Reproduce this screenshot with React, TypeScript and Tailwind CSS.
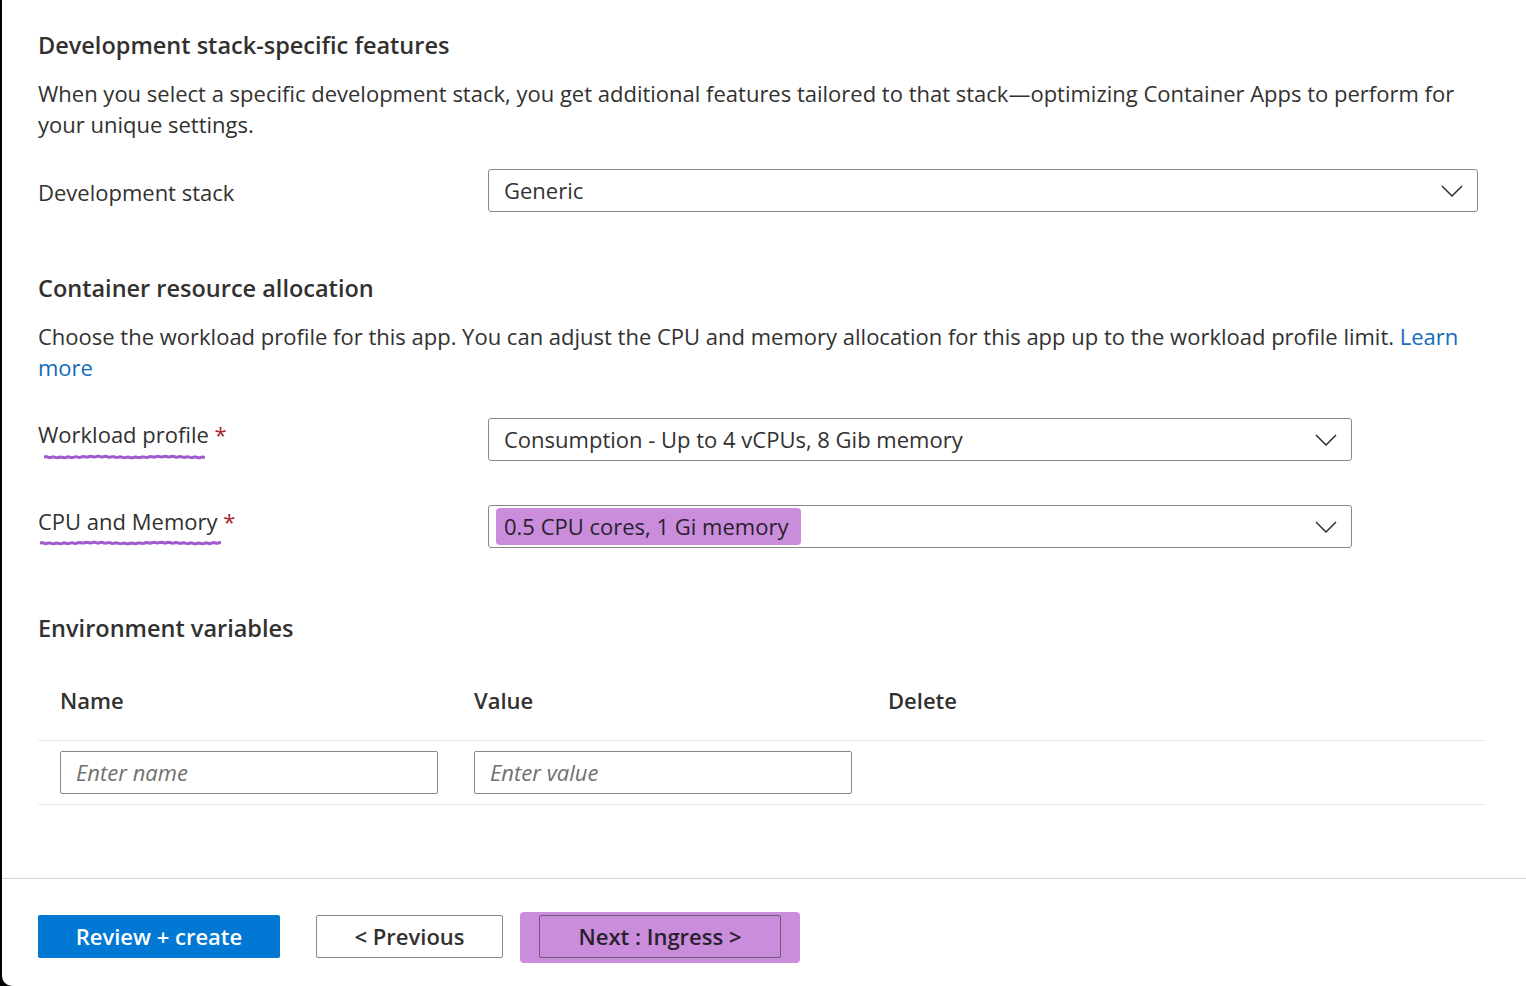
import React from "react";

const font = { fontFamily: '"Segoe UI", "Open Sans", "Noto Sans", sans-serif' };

function Chevron() {
  return (
    <svg width="22" height="12" viewBox="0 0 22 12" fill="none" className="shrink-0">
      <path d="M1 1l10 10L21 1" stroke="#323130" strokeWidth="1.5" strokeLinejoin="miter" />
    </svg>
  );
}

function Squiggle({ width }: { width: number }) {
  // hand-drawn marker line under a label
  const pts: string[] = [];
  for (let x = 0; x <= width; x += 2) {
    const y = 3 + Math.sin(x * 2.3) * 0.45 + Math.sin(x * 0.09) * 0.4;
    pts.push(`${x},${y.toFixed(2)}`);
  }
  return (
    <svg width={width} height="6" viewBox={`0 0 ${width} 6`} className="block">
      <polyline points={pts.join(" ")} fill="none" stroke="#8e3dc4" strokeOpacity="0.85" strokeWidth="3" strokeLinecap="round" />
    </svg>
  );
}

function Select({ value, className = "", highlight = false }: { value: string; className?: string; highlight?: boolean }) {
  return (
    <div className={`h-[43px] border border-[#8a8886] rounded-[3px] flex items-center justify-between pl-[15px] pr-[14px] bg-white ${className}`}>
      {highlight ? (
        <span className="-ml-[8px] pl-[8px] pr-[13px] h-[37px] leading-[37px] rounded-[4px] bg-[#c98ddb] text-[#2a1f2e]">{value}</span>
      ) : (
        <span>{value}</span>
      )}
      <Chevron />
    </div>
  );
}

export default function App() {
  return (
    <div className="bg-black w-[1526px] h-[986px] overflow-hidden">
      <div className="ml-[2px] h-full bg-white rounded-bl-[10px] text-[#323130] text-[22px] leading-[31px] antialiased" style={font}>
        <div className="pl-[36px] pr-[40px]">
          <h2 className="pt-[29px] text-[23.5px] leading-[32px] font-semibold">Development stack-specific features</h2>
          <p className="mt-[17px]">
            When you select a specific development stack, you get additional features tailored to that stack—optimizing Container Apps to perform for your unique settings.
          </p>

          <div className="mt-[29px] flex items-center">
            <div className="w-[450px] pt-[3px]">Development stack</div>
            <Select value="Generic" className="w-[990px]" />
          </div>

          <h2 className="mt-[60px] text-[23.5px] leading-[32px] font-semibold">Container resource allocation</h2>
          <p className="mt-[17px]">
            Choose the workload profile for this app. You can adjust the CPU and memory allocation for this app up to the workload profile limit.{" "}
            <a className="text-[#0f6cbd]">Learn more</a>
          </p>

          <div className="mt-[35px] flex items-start">
            <div className="w-[450px] pt-[1px]">
              <div>
                Workload profile <span className="text-[#a4262c]">*</span>
              </div>
              <div className="ml-[6px] mt-[4px]">
                <Squiggle width={161} />
              </div>
            </div>
            <Select value="Consumption - Up to 4 vCPUs, 8 Gib memory" className="w-[864px]" />
          </div>

          <div className="mt-[44px] flex items-start">
            <div className="w-[450px] pt-[1px]">
              <div>
                CPU and Memory <span className="text-[#a4262c]">*</span>
              </div>
              <div className="ml-[2px] mt-[3px]">
                <Squiggle width={181} />
              </div>
            </div>
            <Select value="0.5 CPU cores, 1 Gi memory" className="w-[864px]" highlight />
          </div>

          <h2 className="mt-[64px] text-[23.5px] leading-[32px] font-semibold">Environment variables</h2>

          <div className="w-[1448px]">
            <div className="mt-[41px] pb-[24px] border-b border-[#edebe9] flex font-semibold">
              <div className="w-[436px] pl-[22px]">Name</div>
              <div className="w-[414px]">Value</div>
              <div>Delete</div>
            </div>
            <div className="pt-[10px] pb-[10px] border-b border-[#edebe9] flex">
              <div className="w-[436px] pl-[22px]">
                <div className="w-[378px] h-[43px] border border-[#8a8886] rounded-[2px] px-[15px] flex items-center italic text-[#707070]">Enter name</div>
              </div>
              <div className="w-[414px]">
                <div className="w-[378px] h-[43px] border border-[#8a8886] rounded-[2px] px-[15px] flex items-center italic text-[#707070]">Enter value</div>
              </div>
            </div>
          </div>
        </div>

        <div className="mt-[73px] border-t border-[#d6d6d6] pl-[36px] pt-[36px] flex items-start">
          <button className="w-[242px] h-[43px] bg-[#0078d4] rounded-[2px] text-white font-semibold">Review + create</button>
          <button className="ml-[36px] w-[187px] h-[43px] border border-[#8a8886] rounded-[2px] bg-white font-semibold">&lt; Previous</button>
          <div className="ml-[17px] -mt-[3px] px-[19px] pt-[3px] pb-[5px] bg-[#c98ddb] rounded-[4px]">
            <button className="w-[242px] h-[43px] border border-[#6f5a78] rounded-[2px] font-semibold text-[#2a1f2e]">Next : Ingress &gt;</button>
          </div>
        </div>
      </div>
    </div>
  );
}
